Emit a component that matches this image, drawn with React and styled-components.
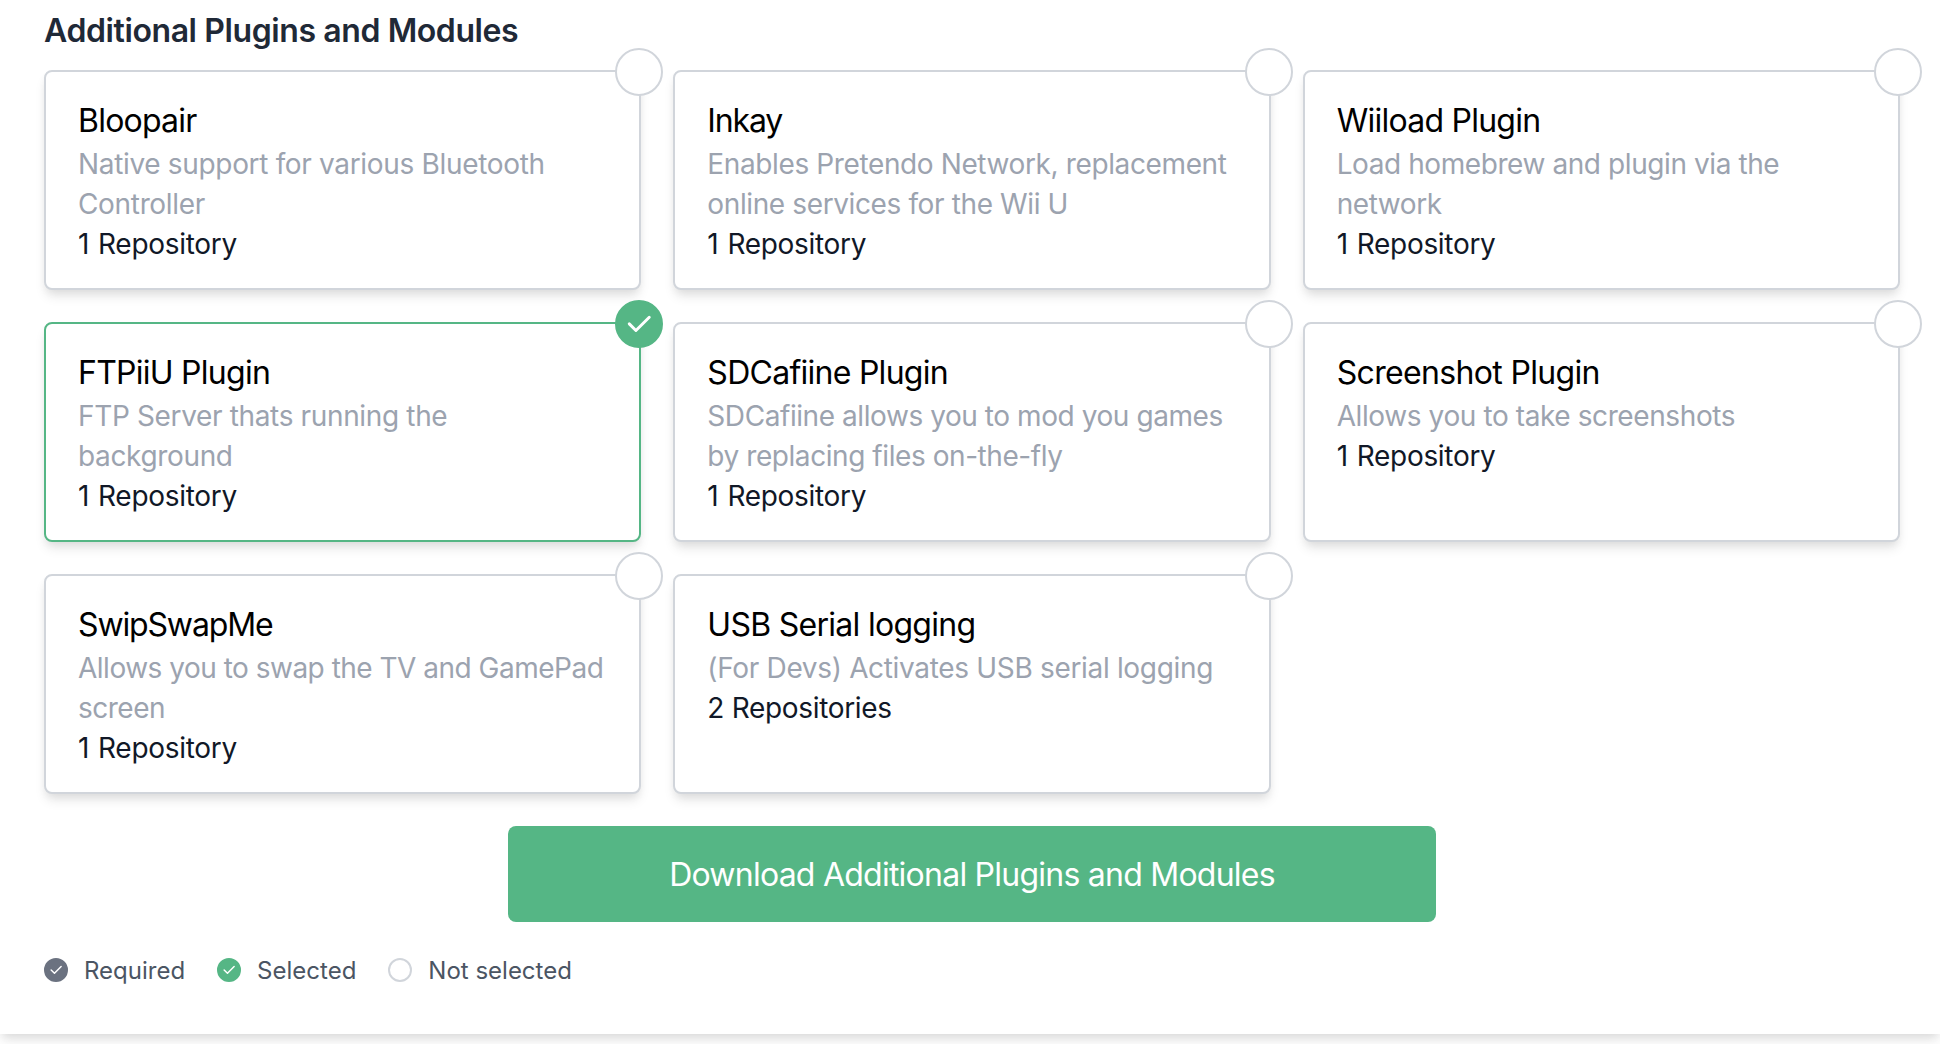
import React from "react";
import styled, { createGlobalStyle } from "styled-components";

const color = {
  green: "#55b685",
  line: "#d1d5db",
  gray: "#6b7280",
};

const shadow =
  "0 8px 12px -2px rgba(0, 0, 0, 0.1), 0 4px 8px -2px rgba(0, 0, 0, 0.06)";

const GlobalStyle = createGlobalStyle`
  * {
    box-sizing: border-box;
  }
  body {
    margin: 0;
    background: #fff;
    font-family: Inter, "Liberation Sans", sans-serif;
  }
  h2, h3, p, ul {
    margin: 0;
    padding: 0;
    font-weight: 400;
  }
`;

const Page = styled.div`
  height: 1044px;
  overflow: hidden;
`;

const Panel = styled.main`
  padding: 7px 40px 47px 44px;
  background: #fff;
  box-shadow: ${shadow};
`;

const Heading = styled.h2`
  margin-bottom: 15px;
  color: #1f2937;
  font-size: 32px;
  font-weight: 600;
  line-height: 48px;
  letter-spacing: -0.4px;
`;

const Grid = styled.div`
  display: grid;
  grid-template-columns: repeat(3, minmax(0, 1fr));
  gap: 32px;
`;

const Card = styled.article`
  position: relative;
  height: 220px;
  padding: 24px 32px;
  border: 2px solid ${(p) => (p.$selected ? color.green : color.line)};
  border-radius: 8px;
  background: #fff;
  box-shadow: ${shadow};
  cursor: pointer;
`;

const Title = styled.h3`
  margin-bottom: -2px;
  color: #000;
  font-size: 32px;
  line-height: 50px;
  letter-spacing: ${(p) => p.$tracking ?? -0.7}px;
`;

const Description = styled.p`
  color: #9ca3af;
  font-size: 28px;
  line-height: 40px;
  letter-spacing: ${(p) => p.$tracking ?? -0.38}px;
`;

const Repositories = styled.p`
  color: #111827;
  font-size: 28px;
  line-height: 40px;
  letter-spacing: ${(p) => (p.$plural ? -0.32 : -0.3)}px;
  word-spacing: ${(p) => (p.$plural ? 0 : 1.4)}px;
`;

const badgeFill = {
  required: color.gray,
  selected: color.green,
  none: "#fff",
};

const Badge = styled.span`
  display: flex;
  flex: none;
  align-items: center;
  justify-content: center;
  width: ${(p) => p.$size}px;
  height: ${(p) => p.$size}px;
  border: 2px solid
    ${(p) => (p.$state === "none" ? color.line : badgeFill[p.$state])};
  border-radius: 50%;
  background: ${(p) => badgeFill[p.$state]};
`;

const CornerBadge = styled(Badge)`
  position: absolute;
  top: -24px;
  right: -24px;
`;

const CheckIcon = styled.svg`
  flex: none;
  width: ${(p) => p.$size}px;
  height: ${(p) => p.$size}px;
  fill: none;
  stroke: #fff;
  stroke-width: 2.2;
  stroke-linecap: round;
  stroke-linejoin: round;
`;

const DownloadButton = styled.button`
  display: block;
  width: 50%;
  height: 96px;
  margin: 32px auto;
  padding: 2px 0 0;
  border: 0;
  border-radius: 8px;
  background: ${color.green};
  color: #fff;
  font-family: inherit;
  font-size: 32px;
  line-height: 48px;
  letter-spacing: -0.76px;
`;

const Legend = styled.ul`
  display: flex;
  gap: 32px;
  list-style: none;
`;

const LegendItem = styled.li`
  display: flex;
  align-items: center;
  gap: 16px;
  height: 32px;
  color: #4b5563;
  font-size: 24px;
`;

const LegendLabel = styled.span`
  padding-top: 2px;
  line-height: 32px;
`;

const LegendSpacer = styled.div`
  height: 1px;
`;

const plugins = [
  { name: "Bloopair", titleTracking: -0.78, text: "Native support for various Bluetooth Controller", repos: 1, tracking: -0.33 },
  { name: "Inkay", titleTracking: -1.15, text: "Enables Pretendo Network, replacement online services for the Wii U", repos: 1 },
  { name: "Wiiload Plugin", titleTracking: -0.75, text: "Load homebrew and plugin via the network", repos: 1, tracking: -0.42 },
  { name: "FTPiiU Plugin", titleTracking: -0.74, text: "FTP Server thats running the background", repos: 1, selected: true, tracking: -0.35 },
  { name: "SDCafiine Plugin", titleTracking: -0.73, text: "SDCafiine allows you to mod you games by replacing files on-the-fly", repos: 1, tracking: -0.43 },
  { name: "Screenshot Plugin", titleTracking: -0.66, text: "Allows you to take screenshots", repos: 1, tracking: -0.4 },
  { name: "SwipSwapMe", titleTracking: -1.15, text: "Allows you to swap the TV and GamePad screen", repos: 1, tracking: -0.5 },
  { name: "USB Serial logging", titleTracking: -0.72, text: "(For Devs) Activates USB serial logging", repos: 2, tracking: -0.33 },
];

const legend = [
  { state: "required", label: "Required" },
  { state: "selected", label: "Selected" },
  { state: "none", label: "Not selected" },
];

function Check({ size }) {
  return (
    <CheckIcon $size={size} viewBox="0.3 0.1 24 24" aria-hidden="true">
      <path d="M5 12l5 5l10 -10" />
    </CheckIcon>
  );
}

function PluginCard({ plugin }) {
  return (
    <Card $selected={plugin.selected}>
      <CornerBadge $size={48} $state={plugin.selected ? "selected" : "none"}>
        {plugin.selected && <Check size={32} />}
      </CornerBadge>
      <Title $tracking={plugin.titleTracking}>{plugin.name}</Title>
      <Description $tracking={plugin.tracking}>{plugin.text}</Description>
      <Repositories $plural={plugin.repos > 1}>
        {`${plugin.repos} ${plugin.repos > 1 ? "Repositories" : "Repository"}`}
      </Repositories>
    </Card>
  );
}

export default function App() {
  return (
    <Page>
      <GlobalStyle />
      <Panel>
        <Heading>Additional Plugins and Modules</Heading>
        <Grid>
          {plugins.map((plugin) => (
            <PluginCard key={plugin.name} plugin={plugin} />
          ))}
        </Grid>
        <DownloadButton type="button">
          Download Additional Plugins and Modules
        </DownloadButton>
        <Legend>
          {legend.map((item) => (
            <LegendItem key={item.state}>
              <Badge $size={24} $state={item.state}>
                {item.state !== "none" && <Check size={16} />}
              </Badge>
              <LegendLabel>{item.label}</LegendLabel>
            </LegendItem>
          ))}
        </Legend>
        <LegendSpacer />
      </Panel>
    </Page>
  );
}
